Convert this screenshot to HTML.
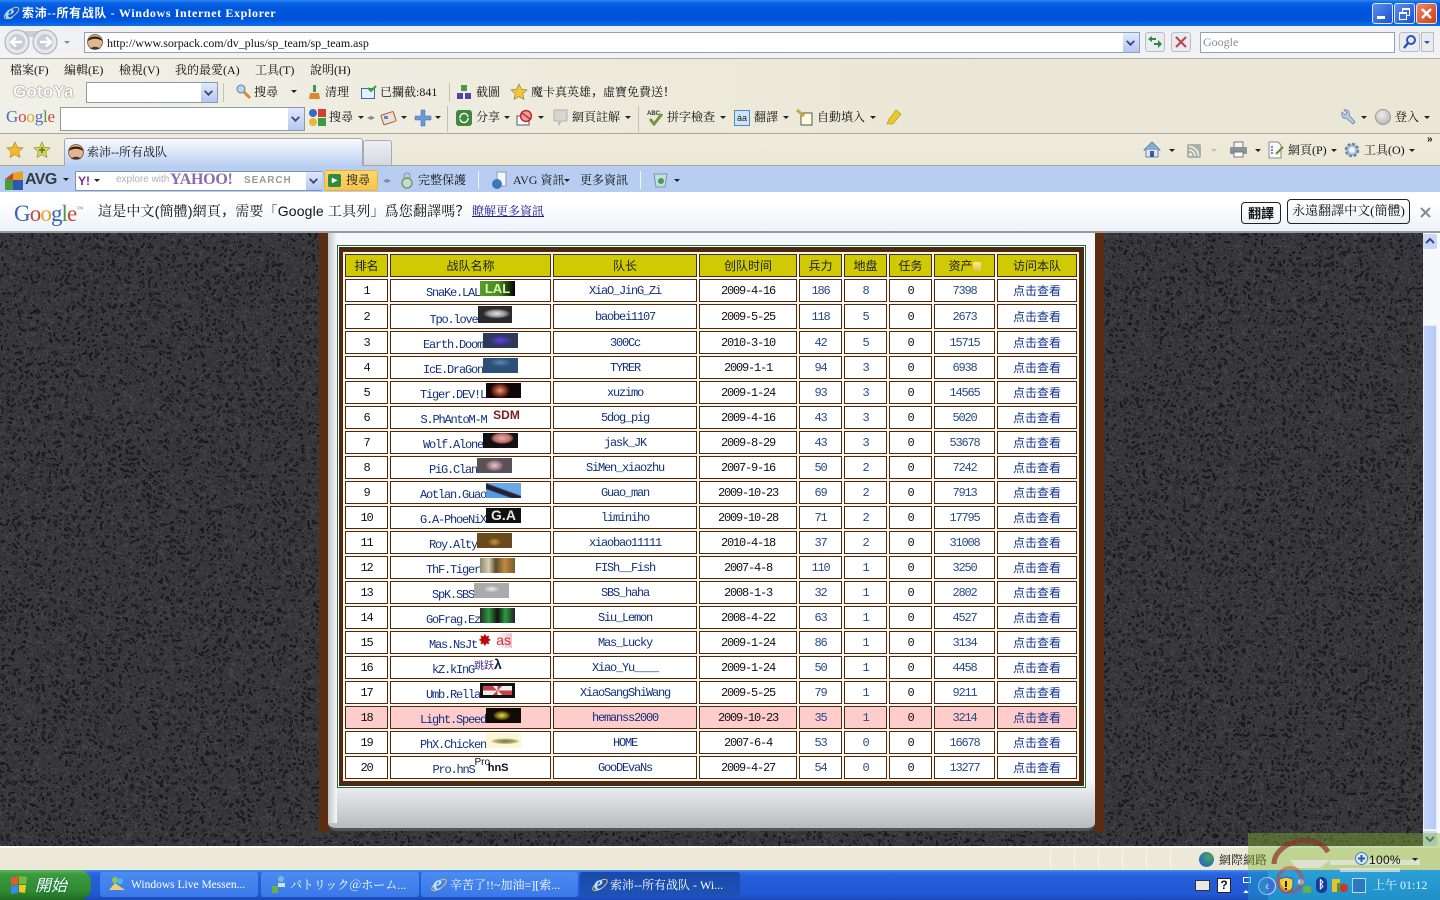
<!DOCTYPE html>
<html lang="zh"><head><meta charset="utf-8"><title>索沛--所有战队</title>
<style>
html,body{margin:0;padding:0;width:1440px;height:900px;overflow:hidden;background:#ece9d8}
body{position:relative;font:12px "Liberation Sans","Noto Sans CJK SC",sans-serif;color:#111}
.a{position:absolute}
.t{position:absolute;white-space:nowrap;font:12px/16px "Liberation Serif","Noto Serif CJK SC",serif;color:#111}
.ar{position:absolute;width:0;height:0;border:3px solid transparent;border-top:3px solid #222;border-bottom:0}
.dd{position:absolute;width:16px;background:linear-gradient(#dfe8fb,#b5c8f2);}
.dd:after{content:"";position:absolute;left:4px;top:50%;margin-top:-5px;width:5px;height:5px;border:solid #3a4a78;border-width:0 2px 2px 0;transform:rotate(45deg) scale(.9)}
.in{position:absolute;background:#fff;border:1px solid #8a9aaa;box-sizing:border-box}
.v{position:absolute;width:1px;background:#c4c1ae}
svg{position:absolute;overflow:visible}
table{position:absolute;left:343px;top:252px;width:736px;border-collapse:separate;border-spacing:2px;table-layout:fixed;background:#fdf6e6}
tr{height:23px}
td,th{box-sizing:border-box;border:1px solid #4a2a14;background:#fff;padding:0;height:23px;text-align:center;font:12px/14px "Liberation Mono",monospace;letter-spacing:-1.2px;color:#111;white-space:nowrap;vertical-align:middle}
th{background:#cfca03;font:12px/15px "Noto Sans CJK SC",sans-serif;letter-spacing:0;color:#222}
td.n{vertical-align:top;padding-top:1px;color:#12307e;line-height:9px}
td.c{color:#12307e}td.b{color:#2a4a85}
td.k{font:12px/14px "Noto Sans CJK SC",sans-serif;letter-spacing:0;color:#10308a}
tr.h td{background:#ffcccc}
tr.r2{height:25px}
tr.r2 td{height:25px}
i{display:inline-block;width:35px;height:15px;letter-spacing:0;font-style:normal;vertical-align:baseline;overflow:hidden;text-align:center;position:relative}
i b{position:absolute;left:0;right:0;top:0;font:bold 14px/15px "Liberation Sans",sans-serif}
.tc{font-family:"Noto Sans CJK TC",sans-serif}
</style></head><body>

<!-- title bar -->
<div class="a" style="left:0;top:0;width:1440px;height:26px;background:linear-gradient(#2b8af0 0,#0a63e6 3px,#0058e0 8px,#0052d8 17px,#0058e0 21px,#0c6fe8 25px)"></div>
<svg style="left:3px;top:5px" width="17" height="17"><ellipse cx="8.5" cy="8" rx="8.5" ry="3.5" transform="rotate(-35 8.5 8)" fill="none" stroke="#e8c060" stroke-width="1"/></svg>
<span class="t" style="left:5px;top:1px;font:italic bold 21px/22px 'Liberation Serif',serif;color:#a8dcff">e</span>
<span class="t" style="left:22px;top:5px;color:#fff;font:bold 12px/16px 'Liberation Serif','Noto Sans CJK SC',serif;letter-spacing:.63px">索沛--所有战队 - Windows Internet Explorer</span>
<div class="a" style="left:1372px;top:3px;width:19px;height:19px;border:1px solid #dfe8fb;border-radius:3px;background:linear-gradient(135deg,#5b8ff0,#1c50cf)"><div class="a" style="left:4px;top:12px;width:8px;height:3px;background:#fff"></div></div>
<div class="a" style="left:1394px;top:3px;width:19px;height:19px;border:1px solid #dfe8fb;border-radius:3px;background:linear-gradient(135deg,#5b8ff0,#1c50cf)"><div class="a" style="left:7px;top:4px;width:6px;height:5px;border:1px solid #fff;border-top-width:2px"></div><div class="a" style="left:4px;top:8px;width:6px;height:5px;border:1px solid #fff;border-top-width:2px;background:#3a6ee0"></div></div>
<div class="a" style="left:1416px;top:3px;width:19px;height:19px;border:1px solid #f0e0d8;border-radius:3px;background:linear-gradient(135deg,#ee8a68,#cf3a14)"><svg width="19" height="19" style="left:0;top:0"><path d="M5 5L14 14M14 5L5 14" stroke="#fff" stroke-width="2.4"/></svg></div>

<!-- nav row -->
<div class="a" style="left:0;top:26px;width:1440px;height:32px;background:linear-gradient(#eef0f4,#f3f3f5)"></div>
<div class="a" style="left:0;top:58px;width:1440px;height:1px;background:#b0ad9c"></div>
<svg style="left:0;top:26px" width="70" height="32">
<rect x="12" y="5" width="36" height="6" fill="#c9cdd4"/>
<circle cx="17" cy="16" r="12" fill="#e6e8ec" stroke="#a9adb5"/><circle cx="17" cy="16" r="8" fill="#c8ccd4"/>
<circle cx="45" cy="16" r="12" fill="#e6e8ec" stroke="#a9adb5"/><circle cx="45" cy="16" r="8" fill="#c8ccd4"/>
<path d="M22 16H12M16 11.5L11 16l5 4.5" fill="none" stroke="#fff" stroke-width="2.4"/>
<path d="M40 16H50M46 11.5L51 16l-5 4.5" fill="none" stroke="#fff" stroke-width="2.4"/>
<path d="M64 15h6l-3 3z" fill="#8a8a8a"/></svg>
<div class="in" style="left:84px;top:32px;width:1056px;height:21px;border-color:#8fa3b5"></div>
<svg style="left:87px;top:34px" width="16" height="16"><circle cx="8" cy="8" r="7.5" fill="#e3b48d" stroke="#8a6a50"/><path d="M1 7C1 1 15 1 15 7 11 4 5 4 1 7z" fill="#2a2018"/><path d="M3 15c2-3 8-3 10 0z" fill="#3a3a3a"/></svg>
<span class="t" style="left:107px;top:35px;letter-spacing:-.06px">http://www.sorpack.com/dv_plus/sp_team/sp_team.asp</span>
<div class="dd" style="left:1123px;top:33px;height:19px"></div>
<div class="a" style="left:1145px;top:32px;width:20px;height:20px;border:1px solid #b8bcc4;border-radius:3px;background:#e9ebf0;box-sizing:border-box"><svg width="18" height="18" style="left:0;top:0"><path d="M2 6l4-3v2h4v2H6v2zM16 11l-4 4v-3H8v-2h4V7z" fill="#2f8a3a"/></svg></div>
<div class="a" style="left:1171px;top:32px;width:20px;height:20px;border:1px solid #b8bcc4;border-radius:3px;background:#e9ebf0;box-sizing:border-box"><svg width="18" height="18" style="left:0;top:0"><path d="M4 4L14 14M14 4L4 14" stroke="#c0404a" stroke-width="2"/></svg></div>
<div class="in" style="left:1200px;top:32px;width:195px;height:21px;border-color:#8fa3b5"></div>
<span class="t" style="left:1203px;top:34px;color:#8a8a8a">Google</span>
<div class="a" style="left:1399px;top:32px;width:21px;height:20px;border:1px solid #b8bcc4;border-radius:3px;background:#e9ebf0;box-sizing:border-box"><svg width="19" height="18" style="left:0;top:0"><circle cx="11" cy="7" r="4" fill="none" stroke="#2a52b8" stroke-width="2"/><path d="M8 10l-4 5" stroke="#2a52b8" stroke-width="2.4"/></svg></div>
<div class="a" style="left:1421px;top:32px;width:13px;height:20px;border:1px solid #b8bcc4;background:#e9ebf0;box-sizing:border-box"></div><div class="ar" style="left:1424px;top:41px;border-top-color:#2a52b8"></div>

<!-- menus -->
<div class="a" style="left:0;top:59px;width:1440px;height:74px;background:linear-gradient(90deg,#f1f0e6,#ebe7d6 70%,#ebe7d6)"></div>
<div class="a" style="left:0;top:133px;width:1440px;height:1px;background:#aca899"></div>
<span class="t" style="left:10px;top:62px">檔案(F)</span><span class="t" style="left:64px;top:62px">編輯(E)</span><span class="t" style="left:119px;top:62px">檢視(V)</span><span class="t" style="left:175px;top:62px">我的最愛(A)</span><span class="t" style="left:255px;top:62px">工具(T)</span><span class="t" style="left:310px;top:62px">說明(H)</span>

<!-- row GotoYa -->
<span class="t" style="left:13px;top:83px;font:bold 17px/18px 'Liberation Sans',sans-serif;color:#fff;text-shadow:0 0 1px #555,0 0 1px #555;letter-spacing:.2px">GotoYa</span>
<div class="in" style="left:86px;top:82px;width:132px;height:21px"></div><div class="dd" style="left:201px;top:83px;height:19px"></div>
<div class="v" style="left:223px;top:83px;height:19px"></div>
<svg style="left:236px;top:84px" width="16" height="16"><circle cx="5" cy="5" r="4" fill="#bcd4ee" stroke="#5a7fa8"/><path d="M8 8l6 6" stroke="#d98a2a" stroke-width="3"/></svg>
<span class="t" style="left:254px;top:84px">搜尋</span><div class="ar" style="left:291px;top:90px"></div>
<svg style="left:308px;top:84px" width="13" height="17"><path d="M5 1h3v7H5z" fill="#3f9a42"/><path d="M2 9h9l1 6H1z" fill="#d9892e"/></svg>
<span class="t" style="left:325px;top:84px">清理</span>
<svg style="left:361px;top:85px" width="16" height="14"><rect x=".5" y="3.5" width="13" height="10" fill="#e6f0fa" stroke="#3a6ea8"/><path d="M7 3l3 3 5-5" stroke="#35a040" stroke-width="2" fill="none"/></svg>
<span class="t" style="left:380px;top:84px">已攔截:841</span>
<div class="v" style="left:449px;top:83px;height:19px"></div>
<svg style="left:457px;top:84px" width="14" height="16"><rect x="4" y="1" width="6" height="6" fill="#4a9a40"/><rect y="9" width="6" height="6" fill="#5a3fb0"/><rect x="8" y="9" width="6" height="6" fill="#5a3fb0"/></svg>
<span class="t" style="left:476px;top:84px">截圖</span>
<svg style="left:511px;top:84px" width="16" height="16"><path d="M8 0l2.4 5.3 5.6.6-4.2 3.8 1.2 5.7L8 12.6 3 15.4l1.2-5.7L0 5.9l5.6-.6z" fill="#f2c63a" stroke="#8a7a30" stroke-width=".6"/></svg>
<span class="t" style="left:531px;top:84px">魔卡真英雄<span class="tc">，</span>虛寶免費送<span class="tc">！</span></span>

<!-- row Google -->
<span class="t" style="left:6px;top:107px;font:17px/20px 'Liberation Serif',serif;color:#4a6ec0;letter-spacing:-.2px">G<span style="color:#c8483a">o</span><span style="color:#d8a828">o</span><span style="color:#4a6ec0">g</span><span style="color:#4a9a48">l</span><span style="color:#c8483a">e</span></span>
<div class="in" style="left:60px;top:107px;width:245px;height:24px"></div><div class="dd" style="left:288px;top:108px;height:22px"></div>
<svg style="left:309px;top:109px" width="17" height="17"><rect width="8" height="8" x="9" fill="#d04030"/><rect width="8" height="8" y="9" x="9" fill="#3a9a40"/><circle cx="4" cy="4" r="4" fill="#3a6ac8"/><circle cx="4" cy="13" r="4" fill="#e8b830"/></svg>
<span class="t" style="left:329px;top:109px">搜尋</span><div class="ar" style="left:358px;top:116px"></div>
<span class="t" style="left:367px;top:110px;font-size:8px;color:#888">◂▸</span>
<svg style="left:381px;top:110px" width="16" height="15"><rect x="1" y="3" width="13" height="10" rx="1" transform="rotate(-18 8 8)" fill="#efe0d0" stroke="#a05a4a"/><rect x="3" y="6" width="4" height="3" fill="#5a88c8"/></svg><div class="ar" style="left:401px;top:116px"></div>
<svg style="left:415px;top:110px" width="16" height="16"><path d="M6 0h4v6h6v4h-6v6H6v-6H0V6h6z" fill="#6a9ad8" stroke="#3a6aa8" stroke-width=".5"/></svg><div class="ar" style="left:435px;top:116px"></div>
<div class="v" style="left:447px;top:106px;height:26px"></div>
<svg style="left:456px;top:110px" width="16" height="16"><rect width="16" height="16" rx="3" fill="#3f8a3a"/><path d="M4 8a4 4 0 0 1 8-1M12 8a4 4 0 0 1-8 1" stroke="#fff" stroke-width="1.4" fill="none"/></svg>
<span class="t" style="left:476px;top:109px">分享</span><div class="ar" style="left:504px;top:116px"></div>
<svg style="left:517px;top:110px" width="16" height="16"><rect y="6" width="12" height="9" fill="#fff" stroke="#555"/><circle cx="9" cy="6" r="5.4" fill="#e8a0a0" stroke="#c02020" stroke-width="1.4"/><path d="M5 3l8 6" stroke="#c02020" stroke-width="1.4"/></svg><div class="ar" style="left:538px;top:116px"></div>
<svg style="left:553px;top:110px" width="15" height="16"><path d="M1 0h13v11H8l-2 4v-4H1z" fill="#d6d6d2" stroke="#b0b0ac"/></svg>
<span class="t" style="left:572px;top:109px">網頁註解</span><div class="ar" style="left:625px;top:116px"></div>
<div class="v" style="left:638px;top:106px;height:26px"></div>
<svg style="left:647px;top:109px" width="17" height="17"><text x="0" y="6" font-size="6" font-family="Liberation Sans" font-weight="bold" fill="#333">ABC</text><path d="M3 10l4 5 8-10" fill="none" stroke="#6a9a3a" stroke-width="3"/></svg>
<span class="t" style="left:667px;top:109px">拼字檢查</span><div class="ar" style="left:720px;top:116px"></div>
<div class="a" style="left:734px;top:110px;width:14px;height:14px;background:#cfe4f8;border:1px solid #4a8ac8;font:9px/14px 'Liberation Sans';text-align:center;color:#222">ȧa</div>
<span class="t" style="left:754px;top:109px">翻譯</span><div class="ar" style="left:783px;top:116px"></div>
<svg style="left:797px;top:110px" width="16" height="16"><rect x="4" y="3" width="11" height="12" fill="#fffbe0" stroke="#555"/><path d="M0 0l7 6" stroke="#c8a840" stroke-width="3"/></svg>
<span class="t" style="left:817px;top:109px">自動填入</span><div class="ar" style="left:870px;top:116px"></div>
<svg style="left:886px;top:109px" width="16" height="17"><path d="M10 1l5 4-8 10H1l2-5z" fill="#e8c82a" stroke="#a89020" stroke-width=".6"/></svg>
<svg style="left:1340px;top:109px" width="16" height="16"><path d="M2 3l3 3 2-2-3-3c4-1 6 2 5 5l6 7-2 2-7-6C3 10 1 7 2 3z" fill="#b8cce8" stroke="#5a7aa8" stroke-width=".7"/></svg><div class="ar" style="left:1361px;top:116px"></div>
<div class="a" style="left:1375px;top:109px;width:16px;height:16px;border-radius:50%;background:radial-gradient(circle at 40% 35%,#eee,#aaa);border:1px solid #999;box-sizing:border-box"></div>
<span class="t" style="left:1395px;top:109px">登入</span><div class="ar" style="left:1424px;top:116px"></div>

<!-- tab row -->
<div class="a" style="left:0;top:134px;width:1440px;height:31px;background:linear-gradient(#eeebdc,#ece8d8)"></div>
<div class="a" style="left:0;top:165px;width:1440px;height:1px;background:#a8a898"></div>
<svg style="left:7px;top:142px" width="16" height="16"><path d="M8 0l2.4 5.3 5.6.6-4.2 3.8 1.2 5.7L8 12.6 3 15.4l1.2-5.7L0 5.9l5.6-.6z" fill="#f2b92a" stroke="#a8801e" stroke-width=".6"/></svg>
<svg style="left:34px;top:142px" width="16" height="16"><path d="M8 0l2.4 5.3 5.6.6-4.2 3.8 1.2 5.7L8 12.6 3 15.4l1.2-5.7L0 5.9l5.6-.6z" fill="#e8d050" stroke="#8a8a30" stroke-width=".6"/><path d="M5 7h6v2H5zM7 5h2v6H7z" fill="#3f9a3a"/></svg>
<div class="a" style="left:64px;top:138px;width:299px;height:28px;box-sizing:border-box;border:1px solid #a0a8b8;border-bottom:0;border-radius:3px 3px 0 0;background:linear-gradient(#f8fafd,#dde8f8 45%,#b9cff2)"></div>
<svg style="left:68px;top:144px" width="16" height="16"><circle cx="8" cy="8" r="7.5" fill="#e3b48d" stroke="#8a6a50"/><path d="M1 7C1 1 15 1 15 7 11 4 5 4 1 7z" fill="#2a2018"/><path d="M3 15c2-3 8-3 10 0z" fill="#3a3a3a"/></svg>
<span class="t" style="left:87px;top:144px">索沛--所有战队</span>
<div class="a" style="left:363px;top:140px;width:29px;height:25px;box-sizing:border-box;border:1px solid #a8acb4;border-bottom:0;border-radius:3px 3px 0 0;background:linear-gradient(#eef0f4,#d4d8e0)"></div>
<svg style="left:1144px;top:142px" width="17" height="16"><path d="M8 0L0 8h2v7h12V8h2z" fill="#dfe8f4" stroke="#4a6a98" stroke-width=".8"/><rect x="6" y="9" width="4" height="6" fill="#3a5a98"/><path d="M8 0L0 8h16z" fill="#6a90c8" opacity=".7"/></svg><div class="ar" style="left:1169px;top:149px"></div>
<svg style="left:1187px;top:144px" width="14" height="14"><rect width="14" height="14" rx="2" fill="#a8b0a8"/><circle cx="3.5" cy="10.5" r="1.5" fill="#eee"/><path d="M2 6a6 6 0 0 1 6 6M2 2.5a9.5 9.5 0 0 1 9.5 9.5" fill="none" stroke="#eee" stroke-width="1.5"/></svg>
<div class="ar" style="left:1211px;top:149px;border-top-color:#bbb"></div>
<svg style="left:1230px;top:142px" width="17" height="16"><rect x="4" y="0" width="9" height="6" fill="#f4f4f4" stroke="#777"/><rect y="5" width="17" height="7" rx="1" fill="#8a929a"/><rect x="4" y="10" width="9" height="5" fill="#fff" stroke="#777"/></svg><div class="ar" style="left:1255px;top:149px"></div>
<svg style="left:1268px;top:142px" width="17" height="16"><path d="M1 0h9l3 3v13H1z" fill="#fafafa" stroke="#8a8a8a"/><path d="M3 5h2M3 8h2M3 11h2" stroke="#4a6ac0" stroke-width="1.5"/><path d="M8 12l7-7" stroke="#6a8a3a" stroke-width="2"/></svg>
<span class="t" style="left:1288px;top:142px">網頁(P)</span><div class="ar" style="left:1331px;top:149px"></div>
<svg style="left:1344px;top:142px" width="16" height="16"><circle cx="8" cy="8" r="6" fill="#a9c0d8" stroke="#6a86a4" stroke-width="2.6" stroke-dasharray="3 1.7"/><circle cx="8" cy="8" r="3" fill="#eef3f8"/></svg>
<span class="t" style="left:1364px;top:142px">工具(O)</span><div class="ar" style="left:1409px;top:149px"></div>
<span class="t" style="left:1427px;top:133px;font:bold 10px/14px 'Liberation Sans'">»</span>

<!-- AVG row -->
<div class="a" style="left:0;top:166px;width:1440px;height:26px;background:#b7cdf1"></div>
<svg style="left:5px;top:171px" width="18" height="19"><path d="M0 8L8 2v7z" fill="#d04030"/><path d="M8 2l10-2v9H8z" fill="#e8a020"/><path d="M0 8l8 1v10H0z" fill="#4a9a40"/><path d="M8 9h10v10H8z" fill="#2a5ab0"/></svg>
<span class="t" style="left:25px;top:171px;font:bold 16px/18px 'Liberation Sans',sans-serif;color:#3a3a40;letter-spacing:-.6px">AVG</span><div class="ar" style="left:63px;top:178px"></div>
<div class="in" style="left:75px;top:171px;width:247px;height:20px;border-color:#7f93b5"></div>
<span class="t" style="left:78px;top:173px;font:bold 12px/16px 'Liberation Sans';color:#7a2a98">Y!</span><div class="ar" style="left:94px;top:179px"></div>
<span class="t" style="left:116px;top:173px;font:10px/14px 'Liberation Sans';color:#b0b0b8">explore with</span>
<span class="t" style="left:170px;top:171px;font:bold 16px/18px 'Liberation Serif';color:#8a6ab0;letter-spacing:-.3px">YAHOO!</span>
<span class="t" style="left:244px;top:174px;font:bold 10px/14px 'Liberation Sans';color:#999;letter-spacing:.9px">SEARCH</span>
<div class="dd" style="left:306px;top:172px;height:18px"></div>
<div class="a" style="left:324px;top:170px;width:54px;height:21px;box-sizing:border-box;background:linear-gradient(#fdd870,#f8c44a);border:1px solid #e8b040;border-radius:3px"></div>
<div class="a" style="left:328px;top:174px;width:13px;height:13px;background:#2f8a3f;border-radius:2px;color:#fff;font:bold 10px/13px 'Liberation Sans';text-align:center">▸</div>
<span class="t" style="left:346px;top:172px">搜尋</span>
<span class="t" style="left:383px;top:173px;font-size:8px;color:#7a8aa8">◂▸</span>
<svg style="left:400px;top:172px" width="14" height="17"><circle cx="7" cy="11" r="5" fill="#cfd8d0" stroke="#6a9a68" stroke-width="1.4"/><path d="M4 7V4a3 3 0 0 1 6 0v3" fill="none" stroke="#8a9a88"/></svg>
<span class="t" style="left:418px;top:172px">完整保護</span>
<div class="v" style="left:478px;top:171px;height:18px;background:#f4f6fb"></div>
<svg style="left:492px;top:172px" width="16" height="17"><path d="M5 0h9v14H5z" fill="#f4f6fa" stroke="#8a9ab0"/><circle cx="5" cy="12" r="5" fill="#3a78b8"/></svg>
<span class="t" style="left:513px;top:172px;color:#222">AVG 資訊</span><div class="ar" style="left:564px;top:179px"></div>
<span class="t" style="left:580px;top:172px">更多資訊</span>
<div class="v" style="left:640px;top:171px;height:18px;background:#f4f6fb"></div>
<svg style="left:653px;top:172px" width="15" height="17"><path d="M1 2h13l-2 13H3z" fill="#c8dce8" stroke="#7a98a8"/><circle cx="8" cy="9" r="3" fill="#3fa04a"/></svg><div class="ar" style="left:674px;top:179px"></div>

<!-- translate bar -->
<div class="a" style="left:0;top:192px;width:1440px;height:40px;background:linear-gradient(#fff 25%,#edf2fa)"></div>
<div class="a" style="left:0;top:231px;width:1440px;height:2px;background:#9a9a9a"></div>
<span class="t" style="left:14px;top:195px;font:23px/28px 'Liberation Serif',serif;color:#3a62b8;letter-spacing:-.9px">G<span style="color:#c8483a">o</span><span style="color:#d8a828">o</span><span style="color:#3a62b8">g</span><span style="color:#4a9a48">l</span><span style="color:#c8483a">e</span><span style="font-size:7px;vertical-align:10px;color:#777">™</span></span>
<span class="t" style="left:98px;top:203px;font:14px/16px 'Liberation Sans','Noto Serif CJK SC',serif;letter-spacing:.17px">這是中文(簡體)網頁<span class="tc">，</span>需要「Google 工具列」爲您翻譯嗎<span class="tc">？</span></span>
<span class="t" style="left:472px;top:203px;color:#1a1a9a;text-decoration:underline">瞭解更多資訊</span>
<div class="a" style="left:1241px;top:202px;width:40px;height:22px;box-sizing:border-box;border:1px solid #222;border-radius:4px;background:linear-gradient(#fff,#eef0f5);text-align:center;font:bold 13px/20px 'Noto Sans CJK SC',sans-serif">翻譯</div>
<div class="a" style="left:1287px;top:199px;width:123px;height:25px;box-sizing:border-box;border:1px solid #222;border-radius:4px;background:linear-gradient(#fff,#eef0f5);text-align:center;font:13px/22px 'Liberation Serif','Noto Serif CJK SC',serif;white-space:nowrap">永遠翻譯中文(簡體)</div>
<svg style="left:1420px;top:207px" width="11" height="11"><path d="M1 1l9 9M10 1l-9 9" stroke="#8a8a8a" stroke-width="2"/></svg>

<!-- page background -->
<svg style="left:0;top:233px" width="1423" height="613">
<filter id="tx" x="0" y="0" width="100%" height="100%" color-interpolation-filters="sRGB">
<feTurbulence type="fractalNoise" baseFrequency=".17" numOctaves="2" seed="7" result="n"/>
<feColorMatrix type="matrix" values="1 0 0 0 0 1 0 0 0 0 1 0 0 0 0 0 0 0 0 1"/>
<feComponentTransfer><feFuncR type="table" tableValues=".17 .14 .17 .2 .07 .2 .24 .17 .28 .2 .07 .2 .2 .17 .17"/><feFuncG type="table" tableValues=".17 .14 .17 .2 .07 .2 .24 .17 .28 .2 .07 .2 .2 .17 .17"/><feFuncB type="table" tableValues=".19 .15 .18 .22 .08 .22 .26 .19 .3 .22 .08 .22 .22 .19 .19"/></feComponentTransfer>
</filter>
<rect width="1423" height="613" filter="url(#tx)"/></svg>

<!-- page panel -->
<div class="a" style="left:319px;top:233px;width:10px;height:599px;background:#5a2c11"></div>
<div class="a" style="left:1095px;top:233px;width:9px;height:599px;background:#5a2c11"></div>
<div class="a" style="left:328px;top:233px;width:767px;height:598px;box-sizing:border-box;border-bottom:3px solid #555;border-radius:0 0 8px 8px;background:linear-gradient(#f6f9fb 0,#f6f9fb 92%,#e8eaee 93.5%,#b9babf 100%)"></div>
<div class="a" style="left:328px;top:233px;width:9px;height:590px;background:linear-gradient(90deg,#bfc4c4,#f6f9fb)"></div>
<div class="a" style="left:337px;top:245px;width:749px;height:543px;box-sizing:border-box;border:1px solid #1f6b45;background:#fff"></div>
<div class="a" style="left:339px;top:247px;width:745px;height:539px;background:#4c2a12"></div>

<table>
<colgroup><col style="width:43px"><col style="width:161px"><col style="width:144px"><col style="width:98px"><col style="width:43px"><col style="width:43px"><col style="width:43px"><col style="width:61px"><col style="width:80px"></colgroup>
<tr><th>排名</th><th>战队名称</th><th>队长</th><th>创队时间</th><th>兵力</th><th>地盘</th><th>任务</th><th>资产<span style="display:inline-block;width:8px;height:9px;background:linear-gradient(#ffe9a0,#e8c040);border-radius:2px;vertical-align:-1px"></span></th><th>访问本队</th></tr>
<tr><td>1</td><td class="n">SnaKe.LAL<i style="background:linear-gradient(90deg,#5a9a2a,#4a8a20 55%,#000 100%)"><b style="color:#d8f8b0;font-size:13px">LAL</b></i></td><td class="c">XiaO_JinG_Zi</td><td>2009-4-16</td><td class="b">186</td><td class="b">8</td><td>0</td><td class="b">7398</td><td class="k">点击查看</td></tr>
<tr class="r2"><td>2</td><td class="n">Tpo.love<i style="height:17px;width:34px;background:radial-gradient(ellipse 14px 5px at 55% 45%,#e4e4e4,#999 60%,transparent 100%),#2a2a2a"></i></td><td class="c">baobei1107</td><td>2009-5-25</td><td class="b">118</td><td class="b">5</td><td>0</td><td class="b">2673</td><td class="k">点击查看</td></tr>
<tr><td>3</td><td class="n">Earth.Doom<i style="background:radial-gradient(ellipse 12px 5px at 50% 50%,#6a3ae8,#3a3a88 70%,transparent),#2c3a58"></i></td><td class="c">300Cc</td><td>2010-3-10</td><td class="b">42</td><td class="b">5</td><td>0</td><td class="b">15715</td><td class="k">点击查看</td></tr>
<tr><td>4</td><td class="n">IcE.DraGon<i style="background:radial-gradient(ellipse 16px 6px at 50% 30%,#5a88b8,#2c5078 70%),#22405e"></i></td><td class="c">TYRER</td><td>2009-1-1</td><td class="b">94</td><td class="b">3</td><td>0</td><td class="b">6938</td><td class="k">点击查看</td></tr>
<tr><td>5</td><td class="n">Tiger.DEV!L<i style="background:radial-gradient(ellipse 10px 8px at 40% 50%,#d8a088,#8a3020 60%,transparent),#100808"></i></td><td class="c">xuzimo</td><td>2009-1-24</td><td class="b">93</td><td class="b">3</td><td>0</td><td class="b">14565</td><td class="k">点击查看</td></tr>
<tr><td>6</td><td class="n">S.PhAntoM-M <i style="width:28px"><b style="color:#7a2020;font-size:12px">SDM</b></i></td><td class="c">5dog_pig</td><td>2009-4-16</td><td class="b">43</td><td class="b">3</td><td>0</td><td class="b">5020</td><td class="k">点击查看</td></tr>
<tr><td>7</td><td class="n">Wolf.Alone<i style="background:radial-gradient(ellipse 12px 6px at 55% 35%,#e8b0a8,#c06a68 70%,transparent),#111"></i></td><td class="c">jask_JK</td><td>2009-8-29</td><td class="b">43</td><td class="b">3</td><td>0</td><td class="b">53678</td><td class="k">点击查看</td></tr>
<tr><td>8</td><td class="n">PiG.Clan<i style="background:radial-gradient(ellipse 9px 6px at 50% 50%,#e8c8c8,#9a7a80 70%,transparent),#5a5058"></i></td><td class="c">SiMen_xiaozhu</td><td>2007-9-16</td><td class="b">50</td><td class="b">2</td><td>0</td><td class="b">7242</td><td class="k">点击查看</td></tr>
<tr><td>9</td><td class="n">Aotlan.Guao<i style="background:linear-gradient(20deg,#5a9ae0 0,#5a9ae0 30%,#223 36%,#223 50%,#6aa8e8 56%)"></i></td><td class="c">Guao_man</td><td>2009-10-23</td><td class="b">69</td><td class="b">2</td><td>0</td><td class="b">7913</td><td class="k">点击查看</td></tr>
<tr><td>10</td><td class="n">G.A-PhoeNiX<i style="background:#111"><b style="color:#e4e4e4;font-size:14px">G.A</b></i></td><td class="c">liminiho</td><td>2009-10-28</td><td class="b">71</td><td class="b">2</td><td>0</td><td class="b">17795</td><td class="k">点击查看</td></tr>
<tr><td>11</td><td class="n">Roy.Alty<i style="background:radial-gradient(ellipse 9px 6px at 50% 60%,#c89a3a,#6a4a1a 75%),#4a3a1e"></i></td><td class="c">xiaobao11111</td><td>2010-4-18</td><td class="b">37</td><td class="b">2</td><td>0</td><td class="b">31008</td><td class="k">点击查看</td></tr>
<tr><td>12</td><td class="n">ThF.Tiger<i style="background:linear-gradient(90deg,#8a8a70 0,#d8d0b0 25%,#5a4a30 45%,#c08a40 70%,#7a5a30)"></i></td><td class="c">FISh__Fish</td><td>2007-4-8</td><td class="b">110</td><td class="b">1</td><td>0</td><td class="b">3250</td><td class="k">点击查看</td></tr>
<tr><td>13</td><td class="n">SpK.SBS<i style="background:radial-gradient(ellipse 12px 5px at 50% 40%,#eee,#aaa 70%),#6a6a70"></i></td><td class="c">SBS_haha</td><td>2008-1-3</td><td class="b">32</td><td class="b">1</td><td>0</td><td class="b">2802</td><td class="k">点击查看</td></tr>
<tr><td>14</td><td class="n">GoFrag.Ez<i style="background:linear-gradient(90deg,#2a2a2a 0,#2a9a40 25%,#111 50%,#2a9a40 72%,#222)"></i></td><td class="c">Siu_Lemon</td><td>2008-4-22</td><td class="b">63</td><td class="b">1</td><td>0</td><td class="b">4527</td><td class="k">点击查看</td></tr>
<tr><td>15</td><td class="n">Mas.NsJt<i style="background:linear-gradient(90deg,#fff 0,#fff 55%,#f0c0c8)"><b style="color:#d03040;font-size:14px;text-align:right;right:1px;font-weight:normal">as</b><b style="color:#c00;font-size:14px;text-align:left;left:2px;text-shadow:0 0 1px #000">✸</b></i></td><td class="c">Mas_Lucky</td><td>2009-1-24</td><td class="b">86</td><td class="b">1</td><td>0</td><td class="b">3134</td><td class="k">点击查看</td></tr>
<tr><td>16</td><td class="n">kZ.kInG<i><b style="color:#3a2a98;font:10px/13px 'Noto Sans CJK SC',sans-serif;text-align:left">跳跃<span style="font:bold 14px/13px 'Liberation Sans';color:#123">λ</span></b></i></td><td class="c">Xiao_Yu____</td><td>2009-1-24</td><td class="b">50</td><td class="b">1</td><td>0</td><td class="b">4458</td><td class="k">点击查看</td></tr>
<tr><td>17</td><td class="n">Umb.Rella<i style="background:conic-gradient(#c84048 0 45deg,#eee 45deg 90deg,#c84048 90deg 135deg,#eee 135deg 180deg,#c84048 180deg 225deg,#eee 225deg 270deg,#c84048 270deg 315deg,#eee 315deg);box-shadow:inset 0 0 0 3px #111"></i></td><td class="c">XiaoSangShiWang</td><td>2009-5-25</td><td class="b">79</td><td class="b">1</td><td>0</td><td class="b">9211</td><td class="k">点击查看</td></tr>
<tr class="h"><td>18</td><td class="n">Light.Speed<i style="background:radial-gradient(ellipse 9px 5px at 45% 50%,#e8e050,#6a5a10 70%,transparent),#100c04"></i></td><td class="c">hemanss2000</td><td>2009-10-23</td><td class="b">35</td><td class="b">1</td><td>0</td><td class="b">3214</td><td class="k">点击查看</td></tr>
<tr><td>19</td><td class="n">PhX.Chicken<i style="background:radial-gradient(ellipse 15px 3px at 55% 55%,#6a7a40,#b8b070 70%,transparent),#fbf6d8"></i></td><td class="c">HOME</td><td>2007-6-4</td><td class="b">53</td><td class="b">0</td><td>0</td><td class="b">16678</td><td class="k">点击查看</td></tr>
<tr><td>20</td><td class="n">Pro.hnS<i style="width:34px"><b style="color:#111;font:10px/10px 'Liberation Sans';text-align:left">Pro</b><b style="color:#111;font:bold 11px/11px 'Liberation Sans';top:5px;text-align:right">hnS</b></i></td><td class="c">GooDEvaNs</td><td>2009-4-27</td><td class="b">54</td><td class="b">0</td><td>0</td><td class="b">13277</td><td class="k">点击查看</td></tr>
</table>

<!-- scrollbar -->
<div class="a" style="left:1423px;top:233px;width:17px;height:613px;background:#f7f9fd"></div>
<div class="a" style="left:1423px;top:325px;width:14px;height:505px;background:linear-gradient(90deg,#c6d6fa,#b4c9f7);border:1px solid #e6eefc;box-sizing:border-box"></div>
<div class="a" style="left:1423px;top:234px;width:14px;height:15px;border-radius:2px;background:#c8d8f8"><svg width="14" height="15" style="left:0;top:0"><path d="M3 9l4-4 4 4" fill="none" stroke="#3a4a78" stroke-width="2"/></svg></div>
<div class="a" style="left:1423px;top:831px;width:14px;height:15px;border-radius:2px;background:#c8d8f8"><svg width="14" height="15" style="left:0;top:0"><path d="M3 6l4 4 4-4" fill="none" stroke="#3a4a78" stroke-width="2"/></svg></div>

<!-- status bar -->
<div class="a" style="left:0;top:846px;width:1440px;height:2px;background:#fbfbf6"></div>
<div class="a" style="left:0;top:848px;width:1440px;height:22px;background:#ece9d8"></div>
<div class="v" style="left:1050px;top:849px;height:19px;background:#f8f7f0"></div><div class="v" style="left:1074px;top:849px;height:19px;background:#f8f7f0"></div><div class="v" style="left:1098px;top:849px;height:19px;background:#f8f7f0"></div><div class="v" style="left:1122px;top:849px;height:19px;background:#f8f7f0"></div><div class="v" style="left:1146px;top:849px;height:19px;background:#f8f7f0"></div><div class="v" style="left:1170px;top:849px;height:19px;background:#f8f7f0"></div>
<div class="a" style="left:1199px;top:852px;width:15px;height:15px;border-radius:50%;background:radial-gradient(circle at 65% 35%,#4aa85a,#2a6ab8 70%)"></div>
<span class="t" style="left:1219px;top:852px">網際網路</span>

<!-- taskbar -->
<div class="a" style="left:0;top:870px;width:1440px;height:30px;background:linear-gradient(#4a92f0 0,#2a68e0 3px,#245edb 8px,#2258d4 24px,#1a48b8 30px)"></div>
<div class="a" style="left:0;top:870px;width:91px;height:30px;border-radius:0 12px 12px 0;background:linear-gradient(#5fb05f 0,#3a9a3c 15%,#2f8a30 70%,#1f6a20)"></div>
<svg style="left:10px;top:875px" width="18" height="20"><path d="M1 3l7-2v8l-7 1z" fill="#e8582a"/><path d="M9 1l8 1-1 7-7-0z" fill="#7ab83a"/><path d="M1 11l7-1v8l-7 1z" fill="#3a88e8"/><path d="M9 10h7l-1 8-6-1z" fill="#f0c82a"/></svg>
<span class="t" style="left:35px;top:874px;color:#fff;font:italic 16px/20px 'Noto Sans CJK SC',sans-serif;text-shadow:1px 1px 1px #174">開始</span>

<div class="a" style="left:100px;top:872px;width:158px;height:25px;border-radius:3px;background:linear-gradient(#4a8cf0,#3a78e8)"></div>
<div class="a" style="left:261px;top:872px;width:158px;height:25px;border-radius:3px;background:linear-gradient(#4a8cf0,#3a78e8)"></div>
<div class="a" style="left:421px;top:872px;width:157px;height:25px;border-radius:3px;background:linear-gradient(#4a8cf0,#3a78e8)"></div>
<div class="a" style="left:580px;top:872px;width:160px;height:25px;border-radius:3px;background:linear-gradient(#1a4aa8,#1e52b8)"></div>
<svg style="left:109px;top:877px" width="17" height="15"><circle cx="6" cy="3" r="3" fill="#8ac84a"/><circle cx="11" cy="4" r="3" fill="#4ab8e8"/><path d="M0 13l6-7 10 7z" fill="#e8d070"/></svg>
<span class="t" style="left:131px;top:877px;color:#fff;font-size:11.5px">Windows Live Messen...</span>
<svg style="left:271px;top:876px" width="15" height="17"><circle cx="10" cy="3" r="3" fill="#7ab8e8"/><path d="M7 7h7v4h-7z" fill="#cfe4f8"/><path d="M1 10h6v7H1z" fill="#6ab04a"/></svg>
<span class="t" style="left:290px;top:877px;color:#fff">パトリック＠ホーム...</span>
<svg style="left:431px;top:877px" width="16" height="16"><ellipse cx="8" cy="8" rx="8.5" ry="3.5" transform="rotate(-35 8 8)" fill="none" stroke="#e8c060"/></svg>
<span class="t" style="left:433px;top:873px;color:#bfe4ff;font:italic bold 20px/22px 'Liberation Serif',serif">e</span>
<span class="t" style="left:450px;top:877px;color:#fff">辛苦了!!~加油=][索...</span>
<svg style="left:592px;top:877px" width="16" height="16"><ellipse cx="8" cy="8" rx="8.5" ry="3.5" transform="rotate(-35 8 8)" fill="none" stroke="#e8c060"/></svg>
<span class="t" style="left:594px;top:873px;color:#bfe4ff;font:italic bold 20px/22px 'Liberation Serif',serif">e</span>
<span class="t" style="left:610px;top:877px;color:#fff">索沛--所有战队 - Wi...</span>

<div class="a" style="left:1195px;top:880px;width:15px;height:11px;background:#e8e8e8;border:1px solid #333;box-sizing:border-box"></div>
<div class="a" style="left:1217px;top:878px;width:14px;height:15px;background:#fff;border:1px solid #222;box-sizing:border-box;text-align:center;font:bold 12px/13px 'Liberation Sans';color:#111">?</div>
<div class="a" style="left:1243px;top:877px;width:8px;height:6px;border:1px solid #fff;box-sizing:border-box"></div><div class="ar" style="left:1243px;top:890px;border-top-color:#fff;transform:rotate(180deg)"></div>
<!-- tray area with watermark tint -->
<div class="a" style="left:1268px;top:870px;width:172px;height:30px;background:linear-gradient(#2ea0d8,#1f90c8)"></div>
<div class="a" style="left:1258px;top:877px;width:18px;height:18px;border-radius:50%;background:#3a70d8;border:1px solid #cfe0fa;box-sizing:border-box;color:#fff;font:bold 12px/16px 'Liberation Sans';text-align:center">‹</div>
<svg style="left:1279px;top:877px" width="14" height="16"><path d="M7 0l7 2v6c0 4-3 6-7 8-4-2-7-4-7-8V2z" fill="#f2d030" stroke="#2a5ab0"/><rect x="6" y="4" width="2" height="6" fill="#222"/><rect x="6" y="11" width="2" height="2" fill="#222"/></svg>
<svg style="left:1297px;top:878px" width="14" height="16"><circle cx="4" cy="4" r="3" fill="#cfe4f8"/><rect x="6" y="8" width="8" height="7" rx="1" fill="#6ab04a"/></svg>
<div class="a" style="left:1316px;top:877px;width:11px;height:16px;border-radius:5px;background:#1a3a9a;color:#fff;font:bold 11px/16px 'Liberation Sans';text-align:center">ᛒ</div>
<svg style="left:1332px;top:877px" width="16" height="16"><rect y="2" width="8" height="13" fill="#e8c030"/><rect x="5" y="6" width="6" height="9" fill="#4a9a3a"/><circle cx="12" cy="11" r="4" fill="#d03030"/></svg>
<div class="a" style="left:1352px;top:878px;width:14px;height:15px;background:#2a78c0;border:1px solid #bcd8f0;box-sizing:border-box"></div>
<span class="t" style="left:1373px;top:877px;color:#eaf6ff;font-size:12px">上午 01:12</span>

<!-- watermark -->
<div class="a" style="left:1248px;top:833px;width:192px;height:37px;background:rgba(130,180,50,.42)"></div>
<div class="a" style="left:1248px;top:870px;width:20px;height:30px;background:rgba(30,160,190,.45)"></div>
<svg style="left:1270px;top:834px" width="170" height="60"><path d="M4 30C4 8 46 -4 58 18" fill="none" stroke="#8a3030" stroke-width="5" opacity=".7"/><path d="M20 26h40l-10 8H26zM60 26h90v5H60zM70 34h60v4H70z" fill="#e8e8e8" opacity=".7"/><circle cx="20" cy="46" r="12" fill="none" stroke="#c84040" stroke-width="4" opacity=".5"/></svg>
<svg style="left:1355px;top:852px" width="13" height="13"><circle cx="6.5" cy="6.5" r="6" fill="#d8e8f8" stroke="#4a78b8"/><path d="M3 6.5h7M6.5 3v7" stroke="#2a58a8" stroke-width="2"/></svg>
<span class="t" style="left:1369px;top:852px;font:12px/16px 'Liberation Sans',sans-serif;letter-spacing:.3px">100%</span>
<div class="ar" style="left:1412px;top:858px"></div>
</body></html>
